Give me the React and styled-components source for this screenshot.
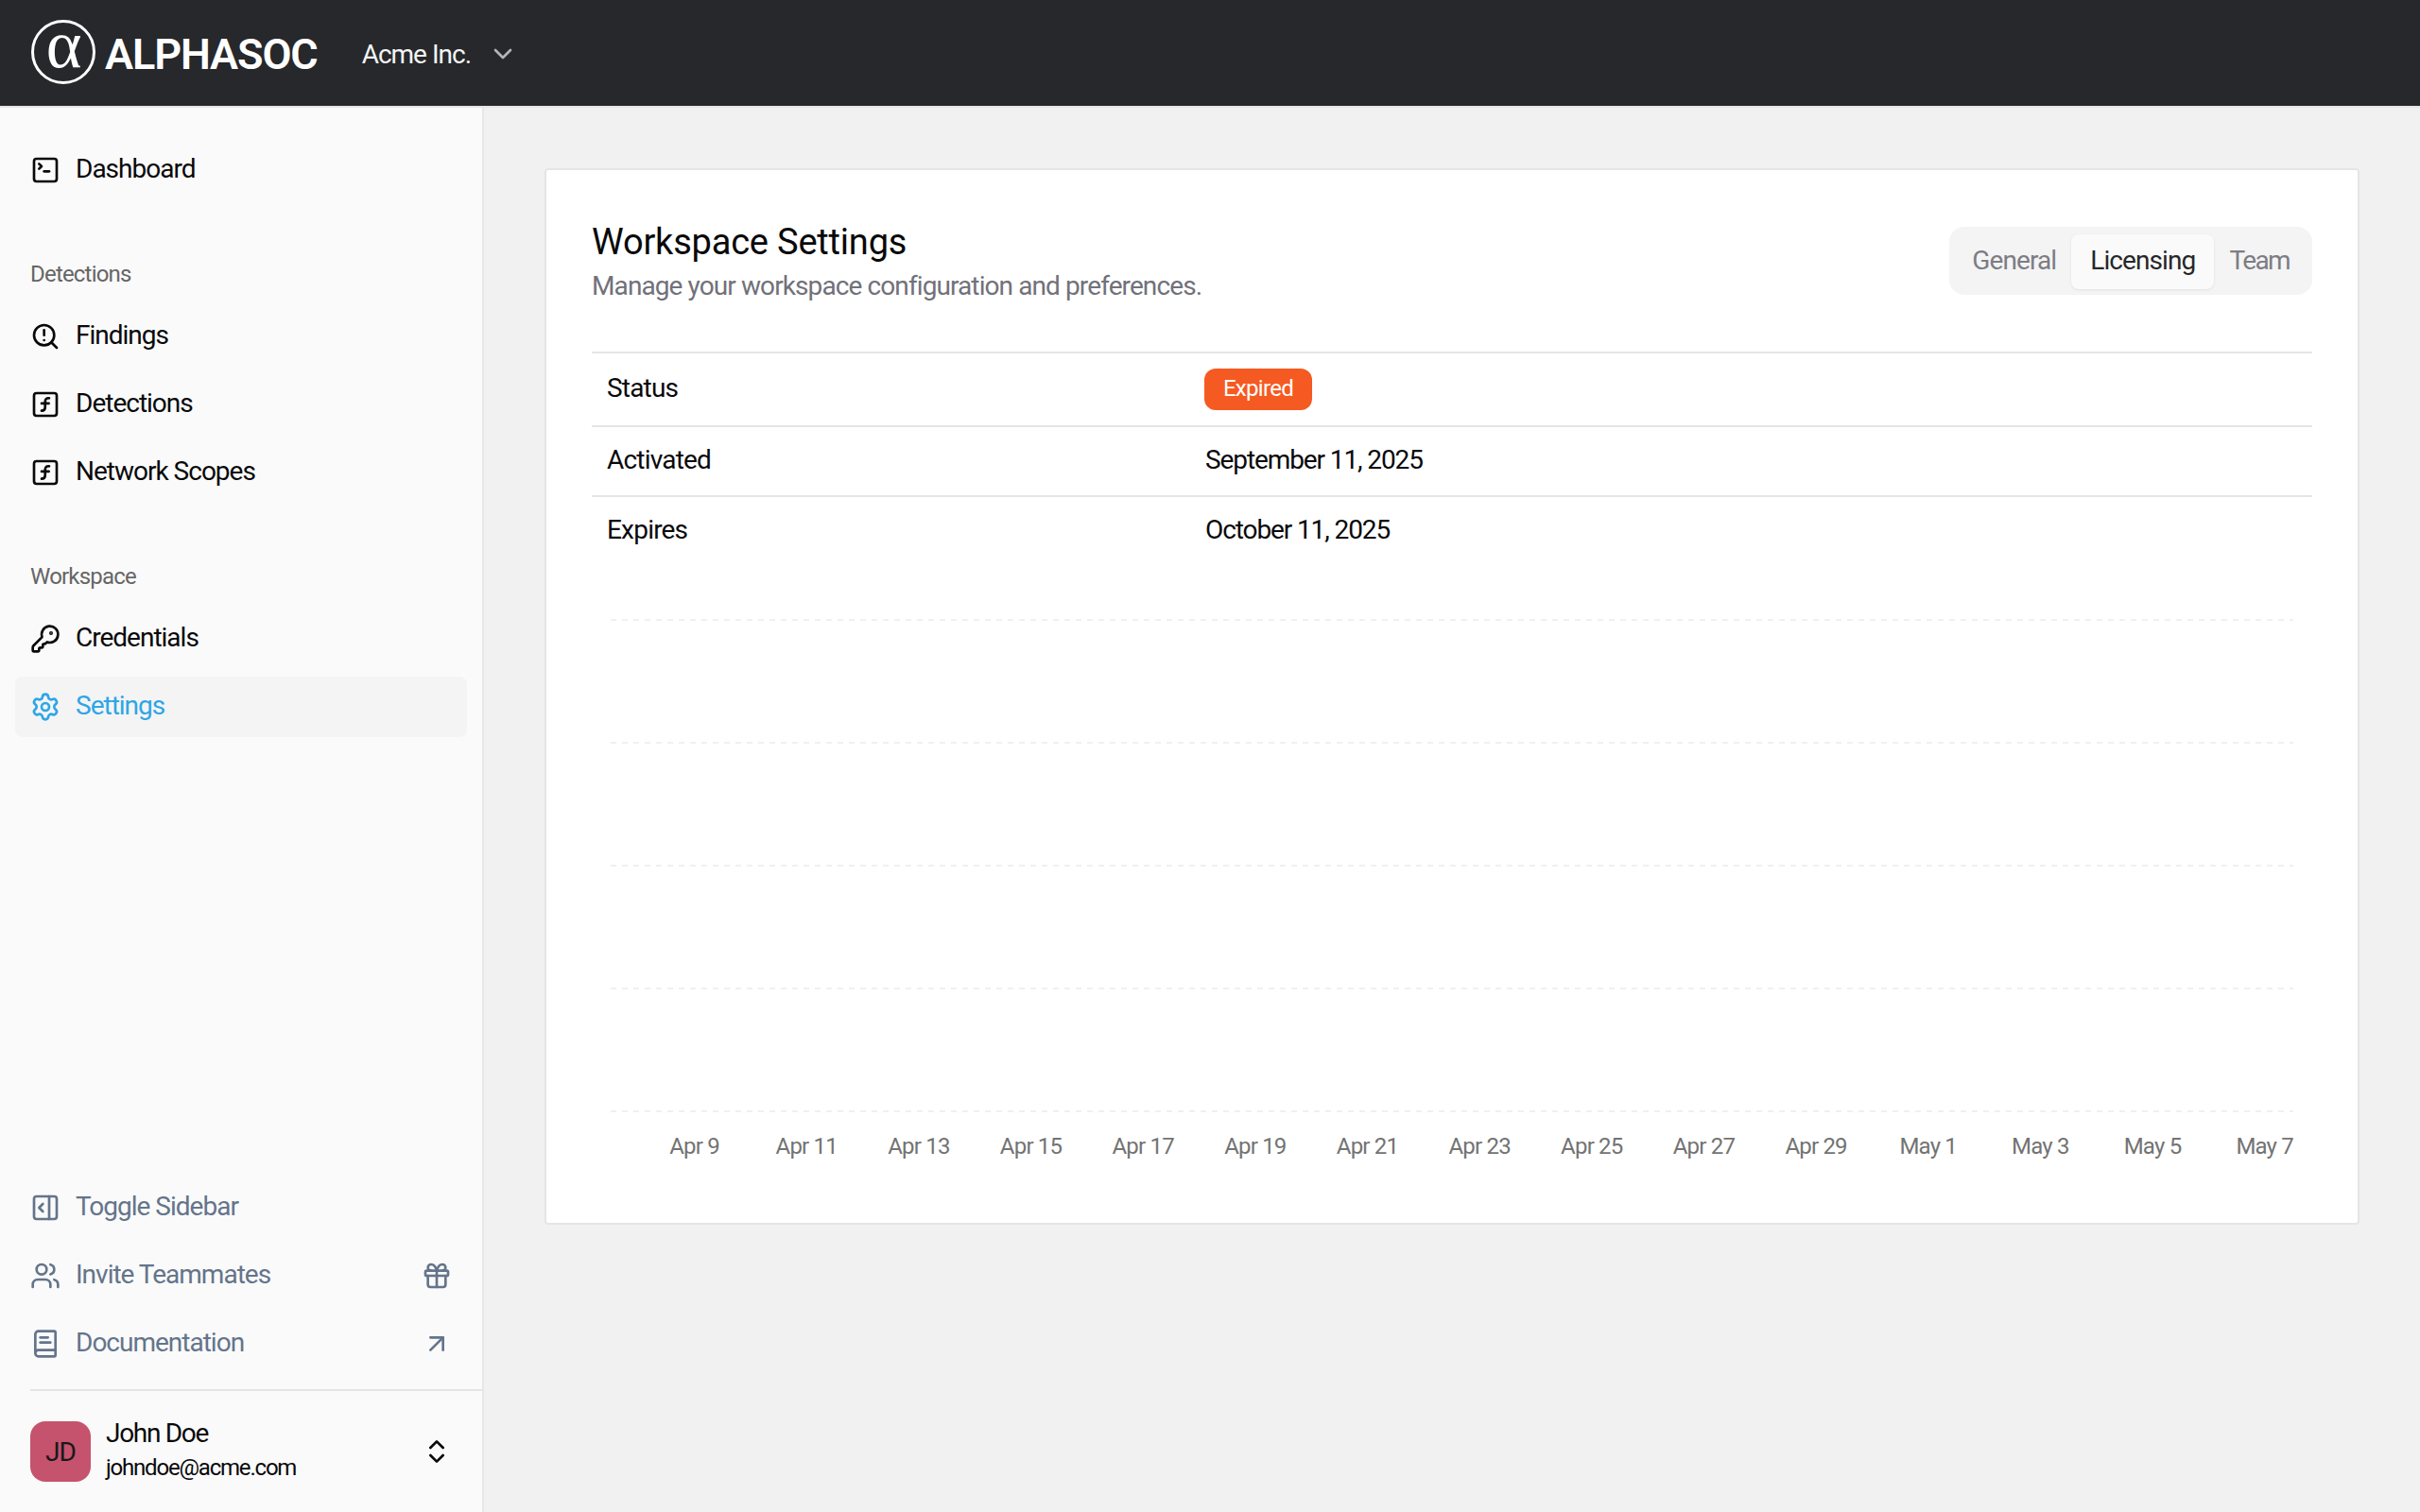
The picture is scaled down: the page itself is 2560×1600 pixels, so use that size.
import React from "react";
import styled, { createGlobalStyle } from "styled-components";
import {
  ArrowUpRight,
  BookText,
  ChevronDown,
  ChevronsUpDown,
  Gift,
  KeyRound,
  PanelRightOpen,
  Settings,
  SquareFunction,
  SquareTerminal,
  Users,
} from "lucide-react";

const GlobalStyle = createGlobalStyle`
  html, body {
    margin: 0;
    padding: 0;
    height: 100%;
  }
  body {
    font-family: Roboto, "Liberation Sans", sans-serif;
    font-size: 28px;
    letter-spacing: -1px;
    color: #09090b;
    background: #f1f1f1;
  }
  #root {
    height: 100%;
  }
`;

// top bar
const Shell = styled.div`
  display: flex;
  flex-direction: column;
  width: 2560px;
  height: 1600px;
  overflow: hidden;
`;

const TopBar = styled.header`
  display: flex;
  align-items: center;
  flex: 0 0 114px;
  box-sizing: border-box;
  padding: 0 32px 2px;
  background: #26282b;
  border-bottom: 2px solid #e5e5e5;
`;

const LogoMark = styled.svg`
  width: 70px;
  height: 70px;
  flex: none;
  overflow: visible;
`;

const LogoText = styled.span`
  margin-left: 9px;
  padding-top: 4px;
  font-size: 45px;
  font-weight: 600;
  letter-spacing: -1.1px;
  color: #fff;
`;

const WorkspaceSwitch = styled.div`
  display: flex;
  align-items: center;
  gap: 18px;
  margin-left: 47px;
  padding-top: 4px;
  color: #f4f4f5;
  svg {
    color: #b4b4b8;
  }
`;

// sidebar
const Body = styled.div`
  display: flex;
  flex: 1;
  min-height: 0;
`;

const Sidebar = styled.aside`
  display: flex;
  flex-direction: column;
  flex: 0 0 512px;
  box-sizing: border-box;
  padding-top: 34px;
  background: #fafafa;
  border-right: 2px solid #e7e7e7;
`;

const NavGroup = styled.nav`
  display: flex;
  flex-direction: column;
  gap: 8px;
  padding: 0 16px;
  margin-bottom: 40px;
`;

const GroupLabel = styled.div`
  height: 64px;
  padding: 0 16px;
  margin-top: 8px;
  margin-bottom: -8px;
  line-height: 60px;
  font-size: 24px;
  letter-spacing: -0.8px;
  color: #666;
`;

const NavItem = styled.a`
  display: flex;
  align-items: center;
  gap: 16px;
  height: 64px;
  padding: 0 16px;
  border-radius: 8px;
  color: ${(p) => (p.$active ? "#2ea6e5" : p.$muted ? "#64748b" : "#09090b")};
  background: ${(p) => (p.$active ? "#f4f4f5" : "transparent")};
  svg {
    flex: none;
  }
`;

const NavText = styled.span`
  flex: 1;
  padding-bottom: 4px;
`;

const Spacer = styled.div`
  flex: 1;
`;

const FooterNav = styled(NavGroup)`
  margin-bottom: 16px;
`;

const UserRow = styled.div`
  display: flex;
  align-items: center;
  gap: 16px;
  height: 130px;
  box-sizing: border-box;
  margin-left: 32px;
  padding: 0 32px 0 0;
  border-top: 2px solid #e5e5e5;
`;

const Avatar = styled.div`
  display: flex;
  align-items: center;
  justify-content: center;
  flex: 0 0 64px;
  height: 64px;
  border-radius: 16px;
  background: #c5536e;
  color: #18181b;
`;

const UserText = styled.div`
  display: flex;
  flex-direction: column;
  gap: 2px;
  flex: 1;
  padding-bottom: 4px;
`;

const UserName = styled.div`
  line-height: 36px;
  letter-spacing: -1.3px;
`;

const UserMail = styled.div`
  line-height: 32px;
  font-size: 24px;
  letter-spacing: -1.2px;
`;

// main area
const Main = styled.main`
  flex: 1;
  min-width: 0;
  padding: 64px;
`;

const Card = styled.section`
  box-sizing: border-box;
  height: 1118px;
  padding: 46px 48px 48px;
  background: #fff;
  border: 2px solid #e5e5e5;
  border-radius: 4px;
`;

const CardHead = styled.div`
  display: flex;
  justify-content: space-between;
  align-items: flex-start;
  height: 146px;
`;

const HeadText = styled.div`
  padding-top: 2px;
`;

const CardTitle = styled.h1`
  margin: 0;
  font-size: 38px;
  line-height: 56px;
  font-weight: 400;
  letter-spacing: -0.2px;
  color: #09090b;
`;

const CardDesc = styled.p`
  margin: 1px 0 0;
  line-height: 36px;
  letter-spacing: -0.9px;
  color: #71717a;
`;

const Tabs = styled.div`
  display: flex;
  align-items: flex-start;
  height: 72px;
  box-sizing: border-box;
  margin-top: 14px;
  padding: 8px;
  background: #f4f4f5;
  border-radius: 16px;
`;

const Tab = styled.div`
  display: flex;
  align-items: center;
  height: 58px;
  padding: 0 ${(p) => (p.$active ? "20px" : "16px")} 4px;
  border-radius: 8px;
  box-sizing: border-box;
  letter-spacing: -0.9px;
  color: ${(p) => (p.$active ? "#27272a" : "#7d7d83")};
  background: ${(p) => (p.$active ? "#fafafa" : "transparent")};
  box-shadow: ${(p) => (p.$active ? "0 1px 3px rgba(0,0,0,0.08)" : "none")};
  &:last-child {
    letter-spacing: -1.6px;
  }
`;

const InfoTable = styled.div`
  display: flex;
  flex-direction: column;
`;

const InfoRow = styled.div`
  display: grid;
  grid-template-columns: 648px 1fr;
  align-items: center;
  box-sizing: border-box;
  min-height: ${(p) => (p.$tall ? "78px" : "74px")};
  border-top: 2px solid #e5e5e5;
`;

const InfoLabel = styled.div`
  padding: 0 0 3px 16px;
  letter-spacing: -0.8px;
`;

const InfoValue = styled.div`
  display: flex;
  padding: 0 0 3px 1px;
  letter-spacing: -1.1px;
`;

const Badge = styled.span`
  display: flex;
  align-items: center;
  justify-content: center;
  width: 114px;
  height: 44px;
  margin: 3px 0 0 -1px;
  padding-bottom: 2px;
  box-sizing: border-box;
  border-radius: 12px;
  background: #f55a22;
  color: #fff;
  font-size: 24px;
  letter-spacing: -0.7px;
`;

const Chart = styled.svg`
  display: block;
  width: 1820px;
  height: 646px;
`;

const AxisLabel = styled.text`
  font-family: Roboto, "Liberation Sans", sans-serif;
  font-size: 24px;
  letter-spacing: -0.8px;
  fill: #737373;
  text-anchor: middle;
`;

const GRID_Y = [58, 188, 318, 448, 578];
const TICKS = [
  "Apr 9", "Apr 11", "Apr 13", "Apr 15", "Apr 17", "Apr 19", "Apr 21", "Apr 23",
  "Apr 25", "Apr 27", "Apr 29", "May 1", "May 3", "May 5", "May 7",
];

function FindingsIcon(props) {
  return (
    <svg width="32" height="32" viewBox="0 0 24 24" fill="none" stroke="currentColor" strokeWidth="2" strokeLinecap="round" strokeLinejoin="round" {...props}>
      <circle cx="11" cy="11" r="8" />
      <path d="m21 21-4.3-4.3" />
      <path d="M11 7v4" />
      <path d="M11 15h.01" />
    </svg>
  );
}

function UsageChart() {
  return (
    <Chart viewBox="0 0 1820 646">
      {GRID_Y.map((y) => (
        <line key={y} x1="20" x2="1800" y1={y} y2={y} stroke="#f0f0f0" strokeWidth="2" strokeDasharray="6 6" />
      ))}
      {TICKS.map((t, i) => (
        <AxisLabel key={t} x={108.6 + i * 118.65} y={623}>{t}</AxisLabel>
      ))}
    </Chart>
  );
}

export default function App() {
  return (
    <Shell>
      <GlobalStyle />
      <TopBar>
        <LogoMark viewBox="0 0 70 70">
          <circle cx="35" cy="35" r="32.5" fill="none" stroke="#fff" strokeWidth="3" />
          <text x="35" y="51" textAnchor="middle" fontFamily="'Liberation Serif', serif" fontSize="72" fill="#fff">α</text>
        </LogoMark>
        <LogoText>ALPHASOC</LogoText>
        <WorkspaceSwitch>
          Acme Inc.
          <ChevronDown size={32} strokeWidth={2} />
        </WorkspaceSwitch>
      </TopBar>
      <Body>
        <Sidebar>
          <NavGroup>
            <NavItem><SquareTerminal size={32} /><NavText>Dashboard</NavText></NavItem>
          </NavGroup>
          <NavGroup>
            <GroupLabel>Detections</GroupLabel>
            <NavItem><FindingsIcon /><NavText>Findings</NavText></NavItem>
            <NavItem><SquareFunction size={32} /><NavText>Detections</NavText></NavItem>
            <NavItem><SquareFunction size={32} /><NavText>Network Scopes</NavText></NavItem>
          </NavGroup>
          <NavGroup>
            <GroupLabel>Workspace</GroupLabel>
            <NavItem><KeyRound size={32} /><NavText>Credentials</NavText></NavItem>
            <NavItem $active><Settings size={32} /><NavText>Settings</NavText></NavItem>
          </NavGroup>
          <Spacer />
          <FooterNav>
            <NavItem $muted><PanelRightOpen size={32} /><NavText>Toggle Sidebar</NavText></NavItem>
            <NavItem $muted><Users size={32} /><NavText>Invite Teammates</NavText><Gift size={32} /></NavItem>
            <NavItem $muted><BookText size={32} /><NavText>Documentation</NavText><ArrowUpRight size={32} /></NavItem>
          </FooterNav>
          <UserRow>
            <Avatar>JD</Avatar>
            <UserText>
              <UserName>John Doe</UserName>
              <UserMail>johndoe@acme.com</UserMail>
            </UserText>
            <ChevronsUpDown size={32} />
          </UserRow>
        </Sidebar>
        <Main>
          <Card>
            <CardHead>
              <HeadText>
                <CardTitle>Workspace Settings</CardTitle>
                <CardDesc>Manage your workspace configuration and preferences.</CardDesc>
              </HeadText>
              <Tabs>
                <Tab>General</Tab>
                <Tab $active>Licensing</Tab>
                <Tab>Team</Tab>
              </Tabs>
            </CardHead>
            <InfoTable>
              <InfoRow $tall>
                <InfoLabel>Status</InfoLabel>
                <InfoValue><Badge>Expired</Badge></InfoValue>
              </InfoRow>
              <InfoRow>
                <InfoLabel>Activated</InfoLabel>
                <InfoValue>September 11, 2025</InfoValue>
              </InfoRow>
              <InfoRow>
                <InfoLabel>Expires</InfoLabel>
                <InfoValue>October 11, 2025</InfoValue>
              </InfoRow>
            </InfoTable>
            <UsageChart />
          </Card>
        </Main>
      </Body>
    </Shell>
  );
}
